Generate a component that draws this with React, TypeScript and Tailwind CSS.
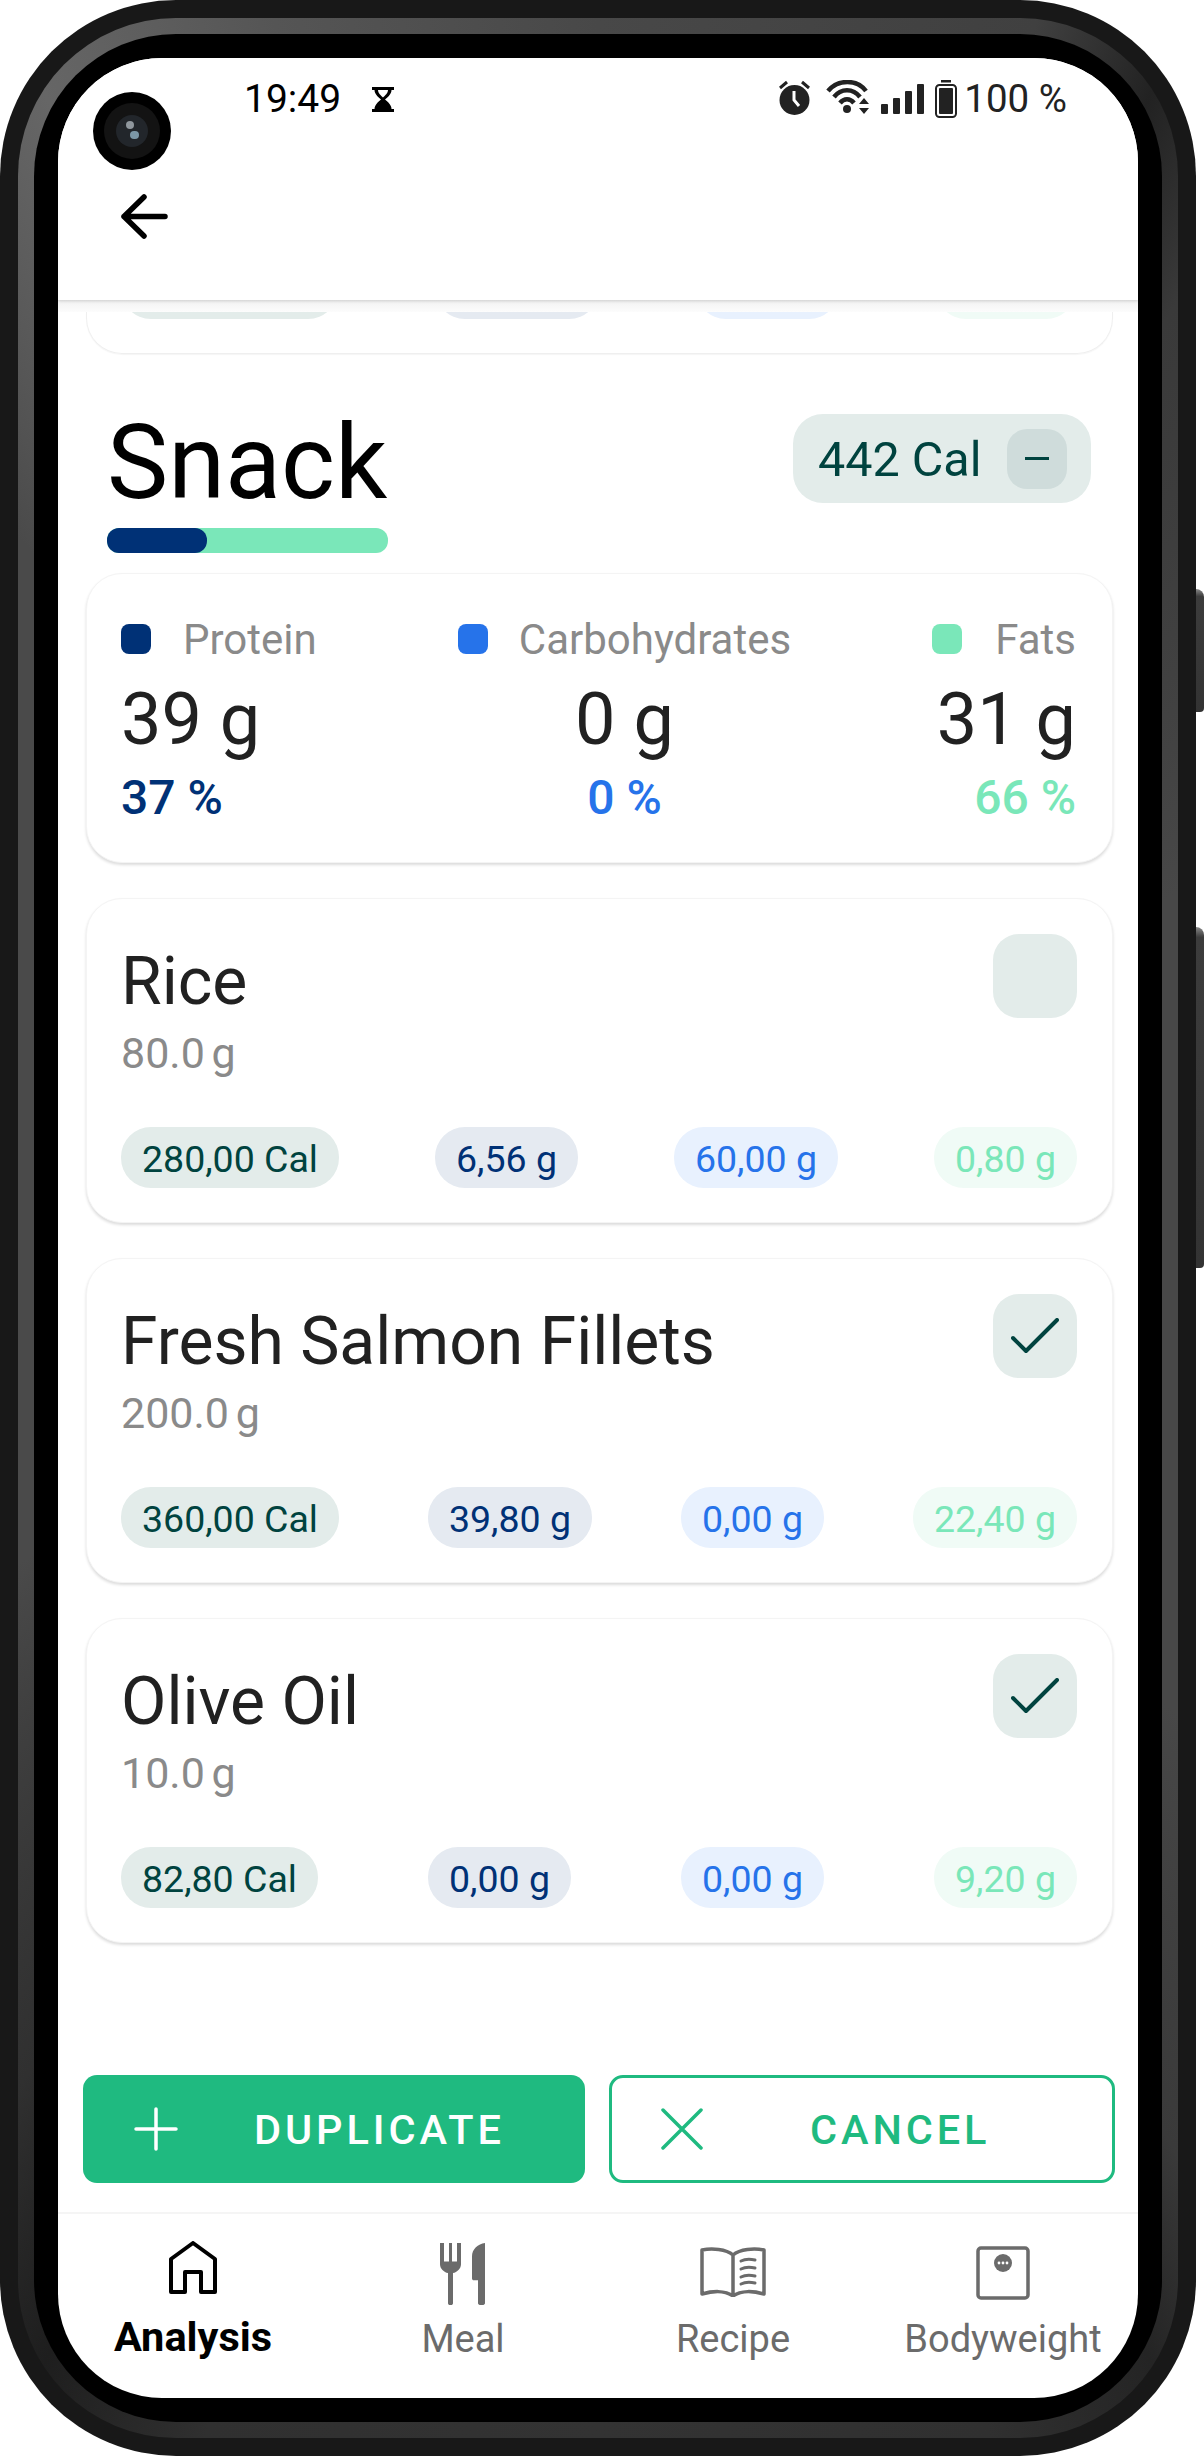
import React from "react";

const Pill = ({ text, tone }: { text: string; tone: string }) => (
  <div className={`h-[61px] px-[21px] pt-[2px] rounded-[30px] flex items-center text-[37.5px] leading-[44px] whitespace-nowrap ${tone}`}>{text}</div>
);

const toneCal = "bg-[#e3ecea] text-[#00433f]";
const toneP = "bg-[#e5eaf1] text-[#003176]";
const toneC = "bg-[#e8f1fe] text-[#2673ea]";
const toneF = "bg-[#f0fbf6] text-[#7ae7b9]";

const ItemCard = ({ name, amount, checked, vals }: { name: string; amount: string; checked: boolean; vals: string[] }) => (
  <div className="h-[325px] rounded-[36px] bg-white border border-[#f4f4f4] shadow-[0_2px_3px_rgba(0,0,0,0.14)] pl-[34px] pr-[35px] pt-[35px]">
    <div className="flex justify-between items-start">
      <div className="pt-[9px]">
        <div className="text-[66px] leading-[78px] text-[#212121]">{name}</div>
        <div className="mt-[8px] text-[43px] leading-[48px] text-[#8a8a8a] [word-spacing:-4px]">{amount}</div>
      </div>
      <div className="w-[84px] h-[84px] rounded-[26px] bg-[#e3ecea] flex items-center justify-center">
        {checked && (
          <svg width="48" height="36" viewBox="0 0 48 36" fill="none" stroke="#00433f" strokeWidth="4" strokeLinecap="round" strokeLinejoin="round">
            <path d="M2 20 L15 33 L46 2" />
          </svg>
        )}
      </div>
    </div>
    <div className="mt-[50px] flex justify-between">
      <Pill text={vals[0]} tone={toneCal} />
      <Pill text={vals[1]} tone={toneP} />
      <Pill text={vals[2]} tone={toneC} />
      <Pill text={vals[3]} tone={toneF} />
    </div>
  </div>
);

const Macro = ({ color, label, value, pct, pctColor, align, gap }: { color: string; label: string; value: string; pct: string; pctColor: string; align: string; gap: string }) => (
  <div className={`flex flex-col ${align}`}>
    <div className={`flex items-center ${gap} h-[48px]`}>
      <div className={`w-[30px] h-[30px] rounded-[8px] -mt-[2px] ${color}`} />
      <div className="text-[42px] leading-[48px] text-[#8a8a8a]">{label}</div>
    </div>
    <div className="mt-[16px] text-[72px] leading-[80px] text-[#212121]">{value}</div>
    <div className={`mt-[10px] text-[48px] leading-[56px] font-medium ${pctColor}`}>{pct}</div>
  </div>
);

const NavItem = ({ icon, label, active }: { icon: React.ReactNode; label: string; active?: boolean }) => (
  <div className="flex-1 flex flex-col items-center">
    <div className="h-[72px] flex items-center justify-center">{icon}</div>
    <div className={`mt-[3px] leading-[48px] whitespace-nowrap ${active ? "text-[41.5px] font-bold text-black" : "text-[38px] pt-[2px] text-[#6b6b6b]"}`}>{label}</div>
  </div>
);

export default function App() {
  return (
    <div className="relative w-[1204px] h-[2456px] bg-white overflow-hidden [font-family:Roboto,sans-serif]">
      <div className="absolute right-0 top-[589px] w-[14px] h-[123px] rounded-tr-[8px] rounded-br-[4px] bg-linear-to-b from-[#8a8a8a] via-[#3c3c3c] via-[6%] to-[#333333]" />
      <div className="absolute right-0 top-[927px] w-[14px] h-[341px] rounded-tr-[8px] rounded-br-[4px] bg-linear-to-b from-[#8a8a8a] via-[#3c3c3c] via-[3%] to-[#333333]" />
      <div className="relative w-[1196px] h-[2456px] rounded-[176px] bg-[#181818] p-[18px]">
        <div className="w-full h-full rounded-[158px] bg-[conic-gradient(#484848_0deg,#404040_20deg,#222222_26deg,#3a3a3a_32deg,#484848_60deg,#484848_130deg,#3a3a3a_148deg,#242424_154deg,#303030_162deg,#333333_180deg,#303030_198deg,#1e1e1e_206deg,#303030_214deg,#4a4a4a_240deg,#4a4a4a_320deg,#666666_334deg,#555555_345deg,#484848_360deg)] p-[16px]">
          <div className="w-full h-full rounded-[142px] bg-black p-[24px]">
            <div className="relative w-full h-full rounded-[104px] bg-white overflow-hidden flex flex-col">
              {/* camera */}
              <div className="absolute left-[35px] top-[34px] w-[78px] h-[78px] rounded-full bg-black flex items-center justify-center z-20">
                <div className="w-[56px] h-[56px] rounded-full bg-[#131313] flex items-center justify-center">
                  <div className="relative w-[32px] h-[32px] rounded-full bg-[#22262b]">
                    <div className="absolute left-[10px] top-[6px] w-[8px] h-[8px] rounded-full bg-[#8f979d]" />
                    <div className="absolute left-[14px] top-[16px] w-[9px] h-[8px] rounded-full bg-[#7c97a6]" />
                  </div>
                </div>
              </div>

              {/* header */}
              <div className="relative z-10 h-[242px] shrink-0 bg-white shadow-[0_1px_3px_rgba(0,0,0,0.16)]">
                <div className="flex justify-between items-center pt-[19px] pl-[186px] pr-[71px]">
                  <div className="flex items-center gap-[31px]">
                    <span className="text-[39px] leading-[44px] text-black">19:49</span>
                    <svg width="22" height="25" viewBox="0 0 22 25" fill="#000">
                      <path d="M0 0H22V3H19.5C19.5 7 16 10 13 12.5C16 15 19.5 18 19.5 22H22V25H0V22H2.5C2.5 18 6 15 9 12.5C6 10 2.5 7 2.5 3H0Z M6 3C6 6 9 8.6 11 10.5C13 8.6 16 6 16 3Z" fillRule="evenodd" />
                    </svg>
                  </div>
                  <div className="flex items-center text-[#222]">
                    <svg width="31" height="35" viewBox="0 0 31 35" className="-mt-[3px]">
                      <circle cx="15.5" cy="20" r="15" fill="#222" />
                      <path d="M15 11V20L20 26" fill="none" stroke="#fff" strokeWidth="3" />
                      <path d="M1 8L8 2M30 8L23 2" stroke="#222" strokeWidth="3" fill="none" />
                    </svg>
                    <svg width="44" height="34" viewBox="0 0 44 34" className="ml-[16px] -mt-[4px]" fill="none" stroke="#222" strokeWidth="4.5">
                      <path d="M2 11C12 -1 31 -1 40 11" />
                      <path d="M8 17C15 8 27 8 34 17" />
                      <path d="M14 23C18 18 24 18 28 23" />
                      <circle cx="21" cy="29" r="4" fill="#222" stroke="none" />
                      <path d="M33 24L38 18L43 24ZM33 28H43L38 34Z" fill="#222" stroke="none" />
                    </svg>
                    <div className="ml-[11px] flex items-end gap-[5px] h-[30px]">
                      <div className="w-[7px] h-[10px] bg-[#222] rounded-[1px]" />
                      <div className="w-[7px] h-[16px] bg-[#222] rounded-[1px]" />
                      <div className="w-[7px] h-[23px] bg-[#222] rounded-[1px]" />
                      <div className="w-[7px] h-[30px] bg-[#222] rounded-[1px]" />
                    </div>
                    <svg width="22" height="38" viewBox="0 0 22 38" className="ml-[11px]" fill="none">
                      <rect x="6" y="0" width="10" height="2.5" fill="#222" />
                      <rect x="1" y="5" width="20" height="32" rx="3.5" stroke="#222" strokeWidth="2" />
                      <rect x="4" y="8" width="14" height="26" rx="1" fill="#222" />
                    </svg>
                    <span className="ml-[7px] text-[38.5px] leading-[44px] text-[#222]">100 %</span>
                  </div>
                </div>
                <svg width="48" height="47" viewBox="0 0 48 47" className="ml-[62px] mt-[72px]" fill="none" stroke="#000" strokeWidth="5.5" strokeLinecap="round" strokeLinejoin="round">
                  <path d="M45 23.5H4M24 4L4 23.5L24 43" />
                </svg>
              </div>

              {/* content */}
              <div className="flex-1 flex flex-col min-h-0">
                <div className="h-[12px] shrink-0 bg-linear-to-b from-[#f2f2f2] to-[#fcfcfc]" />
                <div className="ml-[28px] mr-[25px] h-[42px] shrink-0 overflow-hidden rounded-b-[36px] border-b border-x border-[#efefef] shadow-[0_1px_1px_rgba(0,0,0,0.04)] pl-[34px] pr-[36px]">
                  <div className="flex justify-between -mt-[54px]">
                    <div className="w-[217px] h-[61px] rounded-[30px] bg-[#e3ecea]" />
                    <div className="w-[164px] h-[61px] rounded-[30px] bg-[#e5eaf1]" />
                    <div className="w-[143px] h-[61px] rounded-[30px] bg-[#e8f1fe]" />
                    <div className="w-[140px] h-[61px] rounded-[30px] bg-[#f0fbf6]" />
                  </div>
                </div>

                <div className="mt-[49px] pl-[49px] pr-[47px] flex justify-between items-start shrink-0">
                  <div className="w-[281px]">
                    <div className="text-[103px] leading-[120px] text-black whitespace-nowrap">Snack</div>
                    <div className="mt-[5px] h-[25px] rounded-[12px] bg-[#7ae7b9]">
                      <div className="h-full w-[100px] rounded-[12px] bg-[#003176]" />
                    </div>
                  </div>
                  <div className="mt-[11px] h-[89px] w-[298px] rounded-[30px] bg-[#e3ecea] flex items-center justify-between pl-[25px] pr-[24px]">
                    <span className="pt-[2px] text-[48.5px] leading-[56px] text-[#00433f]">442 Cal</span>
                    <div className="w-[60px] h-[60px] rounded-[20px] bg-[#cfdcdb] flex items-center justify-center">
                      <div className="w-[24px] h-[3px] bg-[#00433f]" />
                    </div>
                  </div>
                </div>

                <div className="mt-[20px] ml-[28px] mr-[25px] flex flex-col gap-[35px] shrink-0">
                  <div className="h-[290px] rounded-[36px] bg-white border border-[#f4f4f4] shadow-[0_2px_3px_rgba(0,0,0,0.14)] pl-[34px] pr-[36px] pt-[42px] flex justify-between">
                    <Macro color="bg-[#003176]" label="Protein" value="39 g" pct="37 %" pctColor="text-[#003176]" align="items-start" gap="gap-[32px]" />
                    <Macro color="bg-[#2673ea]" label="Carbohydrates" value="0 g" pct="0 %" pctColor="text-[#2673ea]" align="items-center" gap="gap-[31px]" />
                    <Macro color="bg-[#7ae7b9]" label="Fats" value="31 g" pct="66 %" pctColor="text-[#7ae7b9]" align="items-end" gap="gap-[33px]" />
                  </div>
                  <ItemCard name="Rice" amount="80.0 g" checked={false} vals={["280,00 Cal", "6,56 g", "60,00 g", "0,80 g"]} />
                  <ItemCard name="Fresh Salmon Fillets" amount="200.0 g" checked vals={["360,00 Cal", "39,80 g", "0,00 g", "22,40 g"]} />
                  <ItemCard name="Olive Oil" amount="10.0 g" checked vals={["82,80 Cal", "0,00 g", "0,00 g", "9,20 g"]} />
                </div>

                <div className="flex-1" />

                <div className="pl-[25px] pr-[23px] flex gap-[24px] shrink-0">
                  <div className="flex-1 h-[108px] rounded-[14px] bg-[#1fba80] flex items-center pl-[51px] text-white">
                    <svg width="44" height="44" viewBox="0 0 44 44" fill="none" stroke="#fff" strokeWidth="3.5" strokeLinecap="round">
                      <path d="M22 2V42M2 22H42" />
                    </svg>
                    <span className="ml-[76px] pt-[2px] text-[41.5px] leading-[48px] font-medium tracking-[3.9px]">DUPLICATE</span>
                  </div>
                  <div className="flex-1 h-[108px] rounded-[14px] border-[3px] border-[#1fba80] bg-white flex items-center pl-[49px] text-[#1fba80]">
                    <svg width="42" height="42" viewBox="0 0 42 42" fill="none" stroke="#1fba80" strokeWidth="3.5" strokeLinecap="round">
                      <path d="M2 2L40 40M40 2L2 40" />
                    </svg>
                    <span className="ml-[107px] pt-[2px] text-[41.5px] leading-[48px] font-medium tracking-[3.9px]">CANCEL</span>
                  </div>
                </div>
                <div className="mt-[29px] h-[2px] bg-[#f5f5f5] shrink-0" />

                <div className="h-[184px] shrink-0 flex pt-[24px]">
                  <NavItem
                    active
                    label="Analysis"
                    icon={
                      <svg width="48" height="54" viewBox="0 0 48 54" fill="none" stroke="#000" strokeWidth="4" strokeLinejoin="round" className="-mt-[12px]">
                        <path d="M24 2L46 18V51H32V31H16V51H2V18Z" />
                      </svg>
                    }
                  />
                  <NavItem
                    label="Meal"
                    icon={
                      <svg width="46" height="62" viewBox="0 0 46 70" preserveAspectRatio="none" fill="#6b6b6b">
                        <path d="M0 0H4V21H9V0H12V21H17V0H21V24C21 29 17 33 13 34V68C13 71 8 71 8 68V34C4 33 0 29 0 24Z" />
                        <path d="M45 0V68C45 71 38 71 38 68V42H33C33 42 32 41 32 40V15C32 7 38 1 45 0Z" />
                      </svg>
                    }
                  />
                  <NavItem
                    label="Recipe"
                    icon={
                      <svg width="66" height="50" viewBox="0 0 66 50" fill="none" stroke="#6b6b6b" strokeWidth="3.5" strokeLinejoin="round" strokeLinecap="round" className="-mt-[4px]">
                        <path d="M33 8C26 2 12 1 2 3V47C12 44 25 43 33 49C41 43 54 44 64 47V3C54 1 40 2 33 8V49" />
                        <path d="M41 14C45 12 50 12 55 13M41 22C45 20 50 20 55 21M41 30C45 28 50 28 55 29M41 37C45 35 50 35 55 36" strokeWidth="3" />
                      </svg>
                    }
                  />
                  <NavItem
                    label="Bodyweight"
                    icon={
                      <svg width="54" height="54" viewBox="0 0 54 54" fill="none" className="-mt-[2px]">
                        <rect x="2" y="2" width="50" height="50" rx="3" stroke="#6b6b6b" strokeWidth="3.5" />
                        <circle cx="27" cy="17" r="9" fill="#6b6b6b" />
                        <circle cx="23" cy="17" r="1.4" fill="#fff" />
                        <circle cx="27" cy="17" r="1.4" fill="#fff" />
                        <circle cx="31" cy="17" r="1.4" fill="#fff" />
                      </svg>
                    }
                  />
                </div>
              </div>
            </div>
          </div>
        </div>
      </div>
    </div>
  );
}
